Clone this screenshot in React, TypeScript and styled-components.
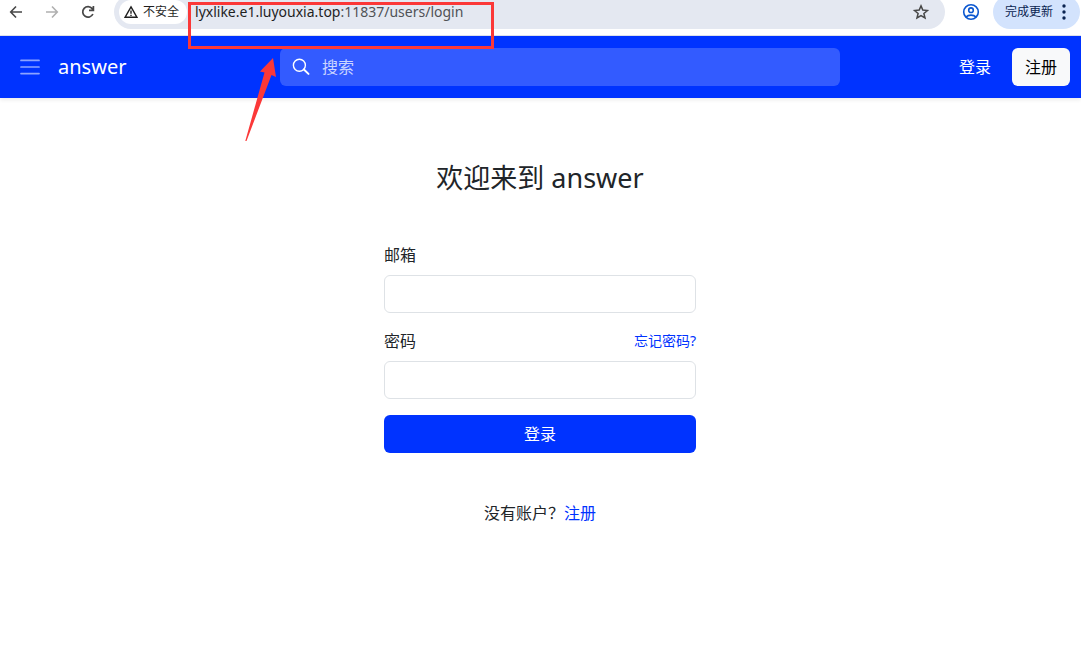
import React from "react";
import styled, { createGlobalStyle } from "styled-components";

const BLUE = "#0033ff";
const RED = "#fb3838";

const GlobalStyle = createGlobalStyle`
  *, *::before, *::after { box-sizing: border-box; }
  body {
    margin: 0;
    background: #fff;
    color: #212529;
    font-family: "Noto Sans", "Noto Sans CJK SC", sans-serif;
    font-size: 16px;
    line-height: 24px;
  }
  button, input { font: inherit; }
`;

const Page = styled.div`
  position: relative;
  overflow: hidden;
`;

const BrowserBar = styled.div`
  display: flex;
  align-items: center;
  height: 36px;
  padding: 0 1px 11px 6px;
  border-bottom: 1px solid #dfe3ec;
  overflow: hidden;
`;

const IconButton = styled.button<{ $color?: string }>`
  display: flex;
  flex: none;
  align-items: center;
  justify-content: center;
  width: 20px;
  height: 20px;
  padding: 0;
  border: 0;
  background: none;
  color: ${(p) => p.$color ?? "#474747"};
`;

const NavButtons = styled.div`
  display: flex;
  flex: none;
  gap: 16px;
  margin-right: 16px;
`;

const AddressBar = styled.div`
  display: flex;
  flex: 1;
  align-items: center;
  height: 34px;
  padding: 0 14px 0 5px;
  border-radius: 17px;
  background: #e4e8f1;
`;

const SecurityChip = styled.button`
  display: flex;
  flex: none;
  align-items: center;
  gap: 5px;
  height: 24px;
  padding: 0 8px 0 5px;
  border: 0;
  border-radius: 12px;
  background: #fff;
  color: #1f1f1f;
  font-size: 12px;
  line-height: 16px;
`;

const Url = styled.div`
  flex: 1;
  margin-left: 8px;
  color: #1f1f1f;
  font-size: 14px;
  line-height: 20px;
`;

const UrlPath = styled.span`
  color: #505256;
`;

const BrowserActions = styled.div`
  display: flex;
  flex: none;
  align-items: center;
  gap: 12px;
  margin-left: 16px;
`;

const UpdateButton = styled.button`
  display: flex;
  flex: none;
  align-items: center;
  gap: 9px;
  height: 34px;
  padding: 0 14px 0 12px;
  border: 0;
  border-radius: 17px;
  background: #d3e3fd;
  color: #0a2351;
  font-size: 12px;
  line-height: 16px;
`;

const Header = styled.header`
  display: flex;
  align-items: center;
  height: 62px;
  padding-right: 11px;
  background: ${BLUE};
  box-shadow: 0 2px 4px rgba(0, 0, 0, 0.08);
`;

const BrandArea = styled.div`
  display: flex;
  flex: none;
  align-items: center;
  gap: 16px;
  width: 280px;
  padding-left: 18px;
`;

const MenuButton = styled.button`
  display: flex;
  padding: 0;
  border: 0;
  background: none;
  color: rgba(255, 255, 255, 0.55);
`;

const Brand = styled.a`
  color: #fff;
  font-size: 20px;
  line-height: 30px;
  text-decoration: none;
`;

const SearchForm = styled.form`
  display: flex;
  flex: 0 1 560px;
  align-items: center;
  gap: 12px;
  height: 38px;
  padding: 0 12px;
  border-radius: 6px;
  background: rgba(255, 255, 255, 0.2);
  color: #fff;
`;

const SearchInput = styled.input`
  flex: 1;
  min-width: 0;
  padding: 0;
  border: 0;
  outline: 0;
  background: none;
  color: #fff;
  &::placeholder { color: rgba(255, 255, 255, 0.75); }
`;

const Account = styled.nav`
  display: flex;
  flex: none;
  align-items: center;
  gap: 21px;
  margin-left: auto;
`;

const NavLink = styled.a`
  color: #fff;
  text-decoration: none;
`;

const SignUpLink = styled.a`
  padding: 7px 13px;
  border-radius: 6px;
  background: #f8f9fa;
  color: #000;
  text-decoration: none;
`;

const Main = styled.main`
  display: flex;
  flex-direction: column;
  align-items: center;
  padding: 64px 1px 64px 0;
`;

const Title = styled.h1`
  margin: 0 0 49px;
  font-size: 27px;
  font-weight: 400;
  line-height: 32px;
`;

const LoginForm = styled.form`
  display: flex;
  flex-direction: column;
  gap: 16px;
  width: 100%;
  max-width: 312px;
  margin-bottom: 48px;
`;

const Field = styled.div`
  display: flex;
  flex-direction: column;
  gap: 8px;
`;

const LabelRow = styled.div`
  display: flex;
  align-items: center;
  justify-content: space-between;
`;

const TextLink = styled.a<{ $small?: boolean }>`
  color: ${BLUE};
  font-size: ${(p) => (p.$small ? 14 : 16)}px;
  text-decoration: none;
`;

const TextBox = styled.input`
  width: 100%;
  height: 38px;
  padding: 6px 12px;
  border: 1px solid #dee2e6;
  border-radius: 6px;
  background: #fff;
`;

const SubmitButton = styled.button`
  height: 38px;
  border: 0;
  border-radius: 6px;
  background: ${BLUE};
  color: #fff;
`;

const Prompt = styled.p`
  display: flex;
  margin: 0;
`;

const Annotation = styled.svg`
  position: absolute;
  top: 0;
  left: 0;
  pointer-events: none;
`;

const stroke = { fill: "none", stroke: "currentColor" } as const;

export default function App() {
  return (
    <Page>
      <GlobalStyle />
      <BrowserBar>
        <NavButtons>
          <IconButton aria-label="后退">
            <svg width="20" height="20" viewBox="0 0 20 20" {...stroke} strokeWidth="1.6">
              <path d="M16 10H5M10 4.5 4.7 10l5.3 5.5" />
            </svg>
          </IconButton>
          <IconButton aria-label="前进" $color="#b0b0b0">
            <svg width="20" height="20" viewBox="0 0 20 20" {...stroke} strokeWidth="1.6">
              <path d="M4 10h11M10 4.5l5.3 5.5-5.3 5.5" />
            </svg>
          </IconButton>
          <IconButton aria-label="重新加载">
            <svg width="20" height="20" viewBox="0 0 20 20" {...stroke} strokeWidth="1.7">
              <path d="M14.9 12a5.3 5.3 0 1 1-.7-5.4l1.2 1.4M15.4 4v4.4H11" />
            </svg>
          </IconButton>
        </NavButtons>
        <AddressBar>
          <SecurityChip>
            <svg width="14" height="14" viewBox="0 0 14 14" {...stroke} strokeWidth="1.4">
              <path d="M7 1.9 13 12.3H1z" />
              <path d="M7 5.6v3.2M7 9.7v1.3" />
            </svg>
            不安全
          </SecurityChip>
          <Url>
            lyxlike.e1.luyouxia.top<UrlPath>:11837/users/login</UrlPath>
          </Url>
          <IconButton aria-label="收藏">
            <svg width="20" height="20" viewBox="0 0 20 20" {...stroke} strokeWidth="1.5">
              <path d="m10 3.9 1.8 4.2 4.6.4-3.5 3 1.1 4.5-4-2.4L6 16l1.1-4.5-3.5-3 4.6-.4z" />
            </svg>
          </IconButton>
        </AddressBar>
        <BrowserActions>
          <IconButton aria-label="个人资料" $color="#0b57d0">
            <svg width="20" height="20" viewBox="0 0 20 20" {...stroke} strokeWidth="1.6">
              <circle cx="10" cy="10" r="7.3" />
              <circle cx="10" cy="8.2" r="2.3" />
              <path d="M4.8 15.1c2.8-2.6 7.6-2.6 10.4 0" />
            </svg>
          </IconButton>
          <UpdateButton>
            完成更新
            <svg width="4" height="16" viewBox="0 0 4 16" fill="currentColor">
              <circle cx="2" cy="2" r="1.7" />
              <circle cx="2" cy="8" r="1.7" />
              <circle cx="2" cy="14" r="1.7" />
            </svg>
          </UpdateButton>
        </BrowserActions>
      </BrowserBar>

      <Header>
        <BrandArea>
          <MenuButton aria-label="菜单">
            <svg width="24" height="24" viewBox="0 0 24 24" {...stroke} strokeWidth="1.7" strokeLinecap="round">
              <path d="M3 5.4h18M3 12h18M3 18.6h18" />
            </svg>
          </MenuButton>
          <Brand href="#">answer</Brand>
        </BrandArea>
        <SearchForm role="search">
          <svg width="18" height="18" viewBox="0 0 18 18" {...stroke} aria-hidden="true">
            <circle cx="7.4" cy="7.2" r="6" strokeWidth="1.4" />
            <path d="m11.9 11.5 4.6 4.4" strokeWidth="2" strokeLinecap="round" />
          </svg>
          <SearchInput type="search" placeholder="搜索" aria-label="搜索" />
        </SearchForm>
        <Account>
          <NavLink href="#">登录</NavLink>
          <SignUpLink href="#">注册</SignUpLink>
        </Account>
      </Header>

      <Main>
        <Title>欢迎来到 answer</Title>
        <LoginForm>
          <Field>
            <label htmlFor="email">邮箱</label>
            <TextBox id="email" type="email" />
          </Field>
          <Field>
            <LabelRow>
              <label htmlFor="password">密码</label>
              <TextLink href="#" $small>忘记密码?</TextLink>
            </LabelRow>
            <TextBox id="password" type="password" />
          </Field>
          <SubmitButton type="submit">登录</SubmitButton>
        </LoginForm>
        <Prompt>
          没有账户？<TextLink href="#">注册</TextLink>
        </Prompt>
      </Main>

      <Annotation width="500" height="150" viewBox="0 0 500 150" aria-hidden="true">
        <rect x="189.5" y="3.5" width="303" height="44" fill="none" stroke={RED} strokeWidth="3" />
        <path d="M273 58 276 77 271.5 75 246.5 141 245.3 141 264.5 72.5 260 71.5z" fill={RED} />
      </Annotation>
    </Page>
  );
}
